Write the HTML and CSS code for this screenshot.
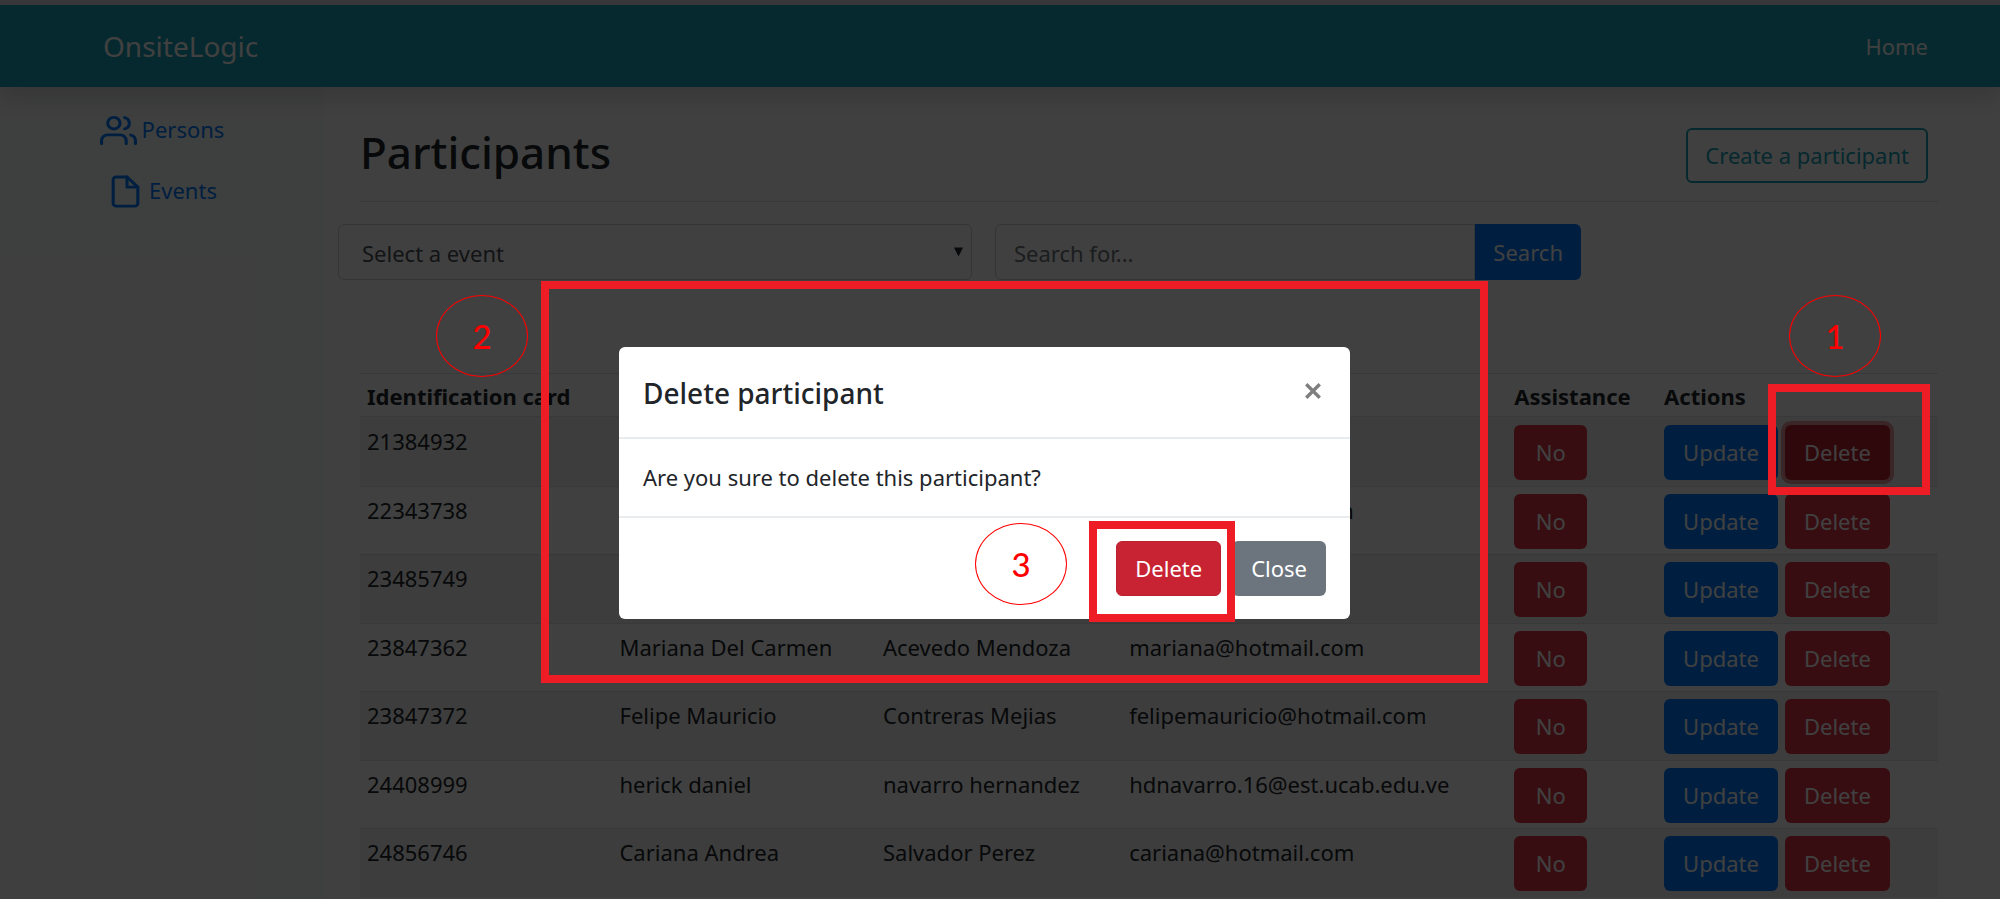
FILE: index.html
```html
<!DOCTYPE html>
<html lang="en">
<head>
<meta charset="utf-8">
<meta name="viewport" content="width=device-width, initial-scale=1">
<title>OnsiteLogic</title>
<link rel="stylesheet" href="styles.css">
</head>
<body>
<header class="navbar">
  <a class="brand" href="#">OnsiteLogic</a>
  <nav><a class="nav-link" href="#">Home</a></nav>
</header>

<div class="shell">
  <aside class="sidebar">
    <a class="side-link" href="#">
      <svg class="side-icon" viewBox="0 0 24 24" preserveAspectRatio="none" aria-hidden="true"><path d="M17 21v-2a4 4 0 0 0-4-4H5a4 4 0 0 0-4 4v2"/><circle cx="9" cy="7" r="4"/><path d="M23 21v-2a4 4 0 0 0-3-3.87M16 3.13a4 4 0 0 1 0 7.75"/></svg>
      <span>Persons</span>
    </a>
    <a class="side-link" href="#">
      <svg class="side-icon" viewBox="0 0 24 24" preserveAspectRatio="none" aria-hidden="true"><path d="M13 2H6a2 2 0 0 0-2 2v16a2 2 0 0 0 2 2h12a2 2 0 0 0 2-2V9z"/><path d="M13 2v7h7"/></svg>
      <span>Events</span>
    </a>
  </aside>

  <main class="content">
    <div class="page-head">
      <h1 class="page-title">Participants</h1>
      <button class="btn btn-outline" type="button">Create a participant</button>
    </div>

    <form class="filters">
      <div class="select-wrap">
        <select class="control" aria-label="Event"><option>Select a event</option></select>
        <svg class="caret" viewBox="0 0 10 10" aria-hidden="true"><path d="M0 0h10L5 10z"/></svg>
      </div>
      <div class="search">
        <input class="control search-input" type="text" placeholder="Search for..." aria-label="Search for">
        <button class="btn btn-primary search-btn" type="button">Search</button>
      </div>
    </form>

    <table class="table">
      <colgroup><col class="c-id"><col class="c-name"><col class="c-last"><col class="c-mail"><col class="c-assist"><col class="c-act"></colgroup>
      <thead>
        <tr><th>Identification card</th><th aria-label="Name"></th><th aria-label="Last name"></th><th aria-label="Email"></th><th>Assistance</th><th>Actions</th></tr>
      </thead>
      <tbody>
        <tr><td>21384932</td><td></td><td></td><td></td><td><button class="btn btn-danger" type="button">No</button></td><td><div class="actions"><button class="btn btn-primary" type="button">Update</button><button class="btn btn-danger is-active" type="button">Delete</button></div></td></tr>
        <tr><td>22343738</td><td></td><td></td><td>daniela@hotmail.com</td><td><button class="btn btn-danger" type="button">No</button></td><td><div class="actions"><button class="btn btn-primary" type="button">Update</button><button class="btn btn-danger" type="button">Delete</button></div></td></tr>
        <tr><td>23485749</td><td></td><td></td><td></td><td><button class="btn btn-danger" type="button">No</button></td><td><div class="actions"><button class="btn btn-primary" type="button">Update</button><button class="btn btn-danger" type="button">Delete</button></div></td></tr>
        <tr><td>23847362</td><td>Mariana Del Carmen</td><td>Acevedo Mendoza</td><td>mariana@hotmail.com</td><td><button class="btn btn-danger" type="button">No</button></td><td><div class="actions"><button class="btn btn-primary" type="button">Update</button><button class="btn btn-danger" type="button">Delete</button></div></td></tr>
        <tr><td>23847372</td><td>Felipe Mauricio</td><td>Contreras Mejias</td><td>felipemauricio@hotmail.com</td><td><button class="btn btn-danger" type="button">No</button></td><td><div class="actions"><button class="btn btn-primary" type="button">Update</button><button class="btn btn-danger" type="button">Delete</button></div></td></tr>
        <tr><td>24408999</td><td>herick daniel</td><td>navarro hernandez</td><td>hdnavarro.16@est.ucab.edu.ve</td><td><button class="btn btn-danger" type="button">No</button></td><td><div class="actions"><button class="btn btn-primary" type="button">Update</button><button class="btn btn-danger" type="button">Delete</button></div></td></tr>
        <tr><td>24856746</td><td>Cariana Andrea</td><td>Salvador Perez</td><td>cariana@hotmail.com</td><td><button class="btn btn-danger" type="button">No</button></td><td><div class="actions"><button class="btn btn-primary" type="button">Update</button><button class="btn btn-danger" type="button">Delete</button></div></td></tr>
      </tbody>
    </table>
  </main>
</div>

<div class="backdrop">
  <section class="modal" role="dialog" aria-modal="true" aria-labelledby="modal-title">
    <header class="modal-head">
      <h2 class="modal-title" id="modal-title">Delete participant</h2>
      <button class="modal-close" type="button" aria-label="Close dialog"><svg viewBox="0 0 16 16" aria-hidden="true"><path d="M2 2l12 12M14 2L2 14"/></svg></button>
    </header>
    <p class="modal-body">Are you sure to delete this participant?</p>
    <footer class="modal-foot">
      <button class="btn btn-danger is-hover" type="button">Delete</button>
      <button class="btn btn-secondary" type="button">Close</button>
    </footer>
  </section>
</div>

<div class="mark-box box-row"></div>
<div class="mark-box box-dialog"></div>
<div class="mark-box box-confirm"></div>
<div class="mark-step step-one">1</div>
<div class="mark-step step-two">2</div>
<div class="mark-step step-three">3</div>
</body>
</html>
```
FILE: styles.css
```css
* { box-sizing: border-box; }

body {
  margin: 0;
  position: relative;
  height: 100vh;
  overflow: hidden;
  display: flex;
  flex-direction: column;
  background: #fff;
  color: #212529;
  font: 22px/33px "Noto Sans", "Open Sans", sans-serif;
}

a { text-decoration: none; }
h1, h2, p { margin: 0; font-weight: 500; }

/* Top bar */
.navbar {
  position: relative;
  display: flex;
  align-items: center;
  justify-content: space-between;
  height: 87px;
  flex: none;
  padding: 0 72px 0 103px;
  background: #17a2b8;
  border-top: 5px solid #dcdce8;
  box-shadow: 0 11px 23px rgba(0, 0, 0, .15);
}
.brand { color: #fff; font-size: 28px; }
.nav-link { color: #fff; }

/* Page columns */
.shell { display: flex; flex: 1; min-height: 0; }
.sidebar {
  flex: none;
  width: 324px;
  padding-top: 26px;
  background: #f8faf9;
  display: flex;
  flex-direction: column;
  gap: 26px;
}
.side-link {
  display: flex;
  justify-content: center;
  gap: 5px;
  height: 35px;
  color: #007bff;
}
.side-icon {
  width: 37px;
  height: 35px;
  fill: none;
  stroke: currentColor;
  stroke-width: 2;
  stroke-linecap: round;
  stroke-linejoin: round;
}
.content { flex: 1; padding: 41px 62px 0 36px; }

.page-head {
  display: flex;
  justify-content: space-between;
  align-items: flex-start;
  padding: 0 10px 18px 0;
  border-bottom: 1px solid #dee2e6;
}
.page-title { font-size: 44px; line-height: 48px; }

/* Buttons */
.btn {
  padding: 10px 18px;
  border: 1px solid transparent;
  border-radius: 6px;
  color: #fff;
  font: inherit;
  white-space: nowrap;
}
.btn-outline { padding: 9px 17px; background: transparent; border: 2px solid #17a2b8; color: #17a2b8; }
.btn-primary { background: #007bff; }
.btn-danger { background: #dc3545; }
.btn-secondary { background: #6c757d; }
.is-active { background: #bd2130; box-shadow: 0 0 0 4px rgba(220, 53, 69, .5); }
.is-hover { background: #c82333; border-color: #bd2130; }

/* Filters */
.filters { display: flex; gap: 23px; margin: 22px 0 0 -22px; }
.select-wrap { position: relative; width: 40%; flex: none; max-width: 634px; }
.search { display: flex; width: 37%; max-width: 586px; }
.control {
  width: 100%;
  height: 56px;
  padding: 2px 23px 0;
  appearance: none;
  background: #fff;
  border: 1px solid #ced4da;
  border-radius: 6px;
  color: #495057;
  font: inherit;
}
.search-input { flex: 1; min-width: 0; padding: 2px 18px 0; border-radius: 6px 0 0 6px; }
.search-input::placeholder { color: #6c757d; opacity: 1; }
.search-btn { padding: 10px 17px; border-radius: 0 6px 6px 0; }
.caret { position: absolute; right: 9px; top: 23px; width: 9px; height: 10px; fill: #212529; }

/* Participants table */
.table { width: 100%; margin-top: 93px; border-collapse: separate; border-spacing: 0; table-layout: fixed; }
.c-id { width: 16%; }
.c-name { width: 16.7%; }
.c-last { width: 15.6%; }
.c-mail { width: 24.4%; }
.c-assist { width: 9.5%; }
.c-act { width: 17.8%; }
.table th { padding: 6px 7px 3px; border-top: 1px solid #dee2e6; border-bottom: 1px solid #dee2e6; text-align: left; font-weight: 700; white-space: nowrap; }
.table td { height: 69px; padding: 7px 7px 6px; border-top: 1px solid #dee2e6; vertical-align: top; white-space: nowrap; }
.table tbody tr:nth-child(odd) { background: #f2f2f2; }
.table tbody tr:nth-child(even) td { height: 68px; padding-bottom: 5px; }
.table tbody tr:first-child td { border-top: 0; padding-top: 8px; }
.table td .btn { display: block; min-width: 73px; }
.actions { display: flex; gap: 7px; }

/* Dialog */
.backdrop {
  position: absolute;
  inset: 0;
  display: flex;
  justify-content: center;
  align-items: flex-start;
  padding: 347px 31px 0 0;
  background: rgba(0, 0, 0, .75);
}
.modal { width: 731px; background: #fff; border-radius: 6px; }
.modal-head, .modal-foot { display: flex; align-items: center; padding: 0 24px; }
.modal-head { justify-content: space-between; padding-block: 26px 24px; border-bottom: 2px solid #e9ecef; }
.modal-title { font-size: 28px; line-height: 40px; }
.modal-close { display: flex; padding: 0 4px 4px; border: 0; background: none; }
.modal-close svg { width: 18px; height: 18px; fill: none; stroke: #7f7f7f; stroke-width: 3; }
.modal-body { padding: 22px 24px; font-weight: 400; }
.modal-foot { justify-content: flex-end; gap: 11px; padding-block: 23px; border-top: 2px solid #e9ecef; }

/* Numbered step callouts */
.mark-box { position: absolute; border: 8px solid #ee1c24; }
.box-row { left: 1768px; top: 384px; width: 162px; height: 111px; }
.box-dialog { left: 541px; top: 281px; width: 947px; height: 402px; }
.box-confirm { left: 1089px; top: 521px; width: 146px; height: 101px; }
.mark-step {
  position: absolute;
  display: flex;
  align-items: center;
  justify-content: center;
  width: 92px;
  height: 82px;
  border: 1px solid #f00;
  border-radius: 50%;
  color: #f00;
  font: 500 33px/40px Lato, sans-serif;
}
.step-one { left: 1789px; top: 295px; }
.step-two { left: 436px; top: 295px; }
.step-three { left: 975px; top: 523px; }
```
